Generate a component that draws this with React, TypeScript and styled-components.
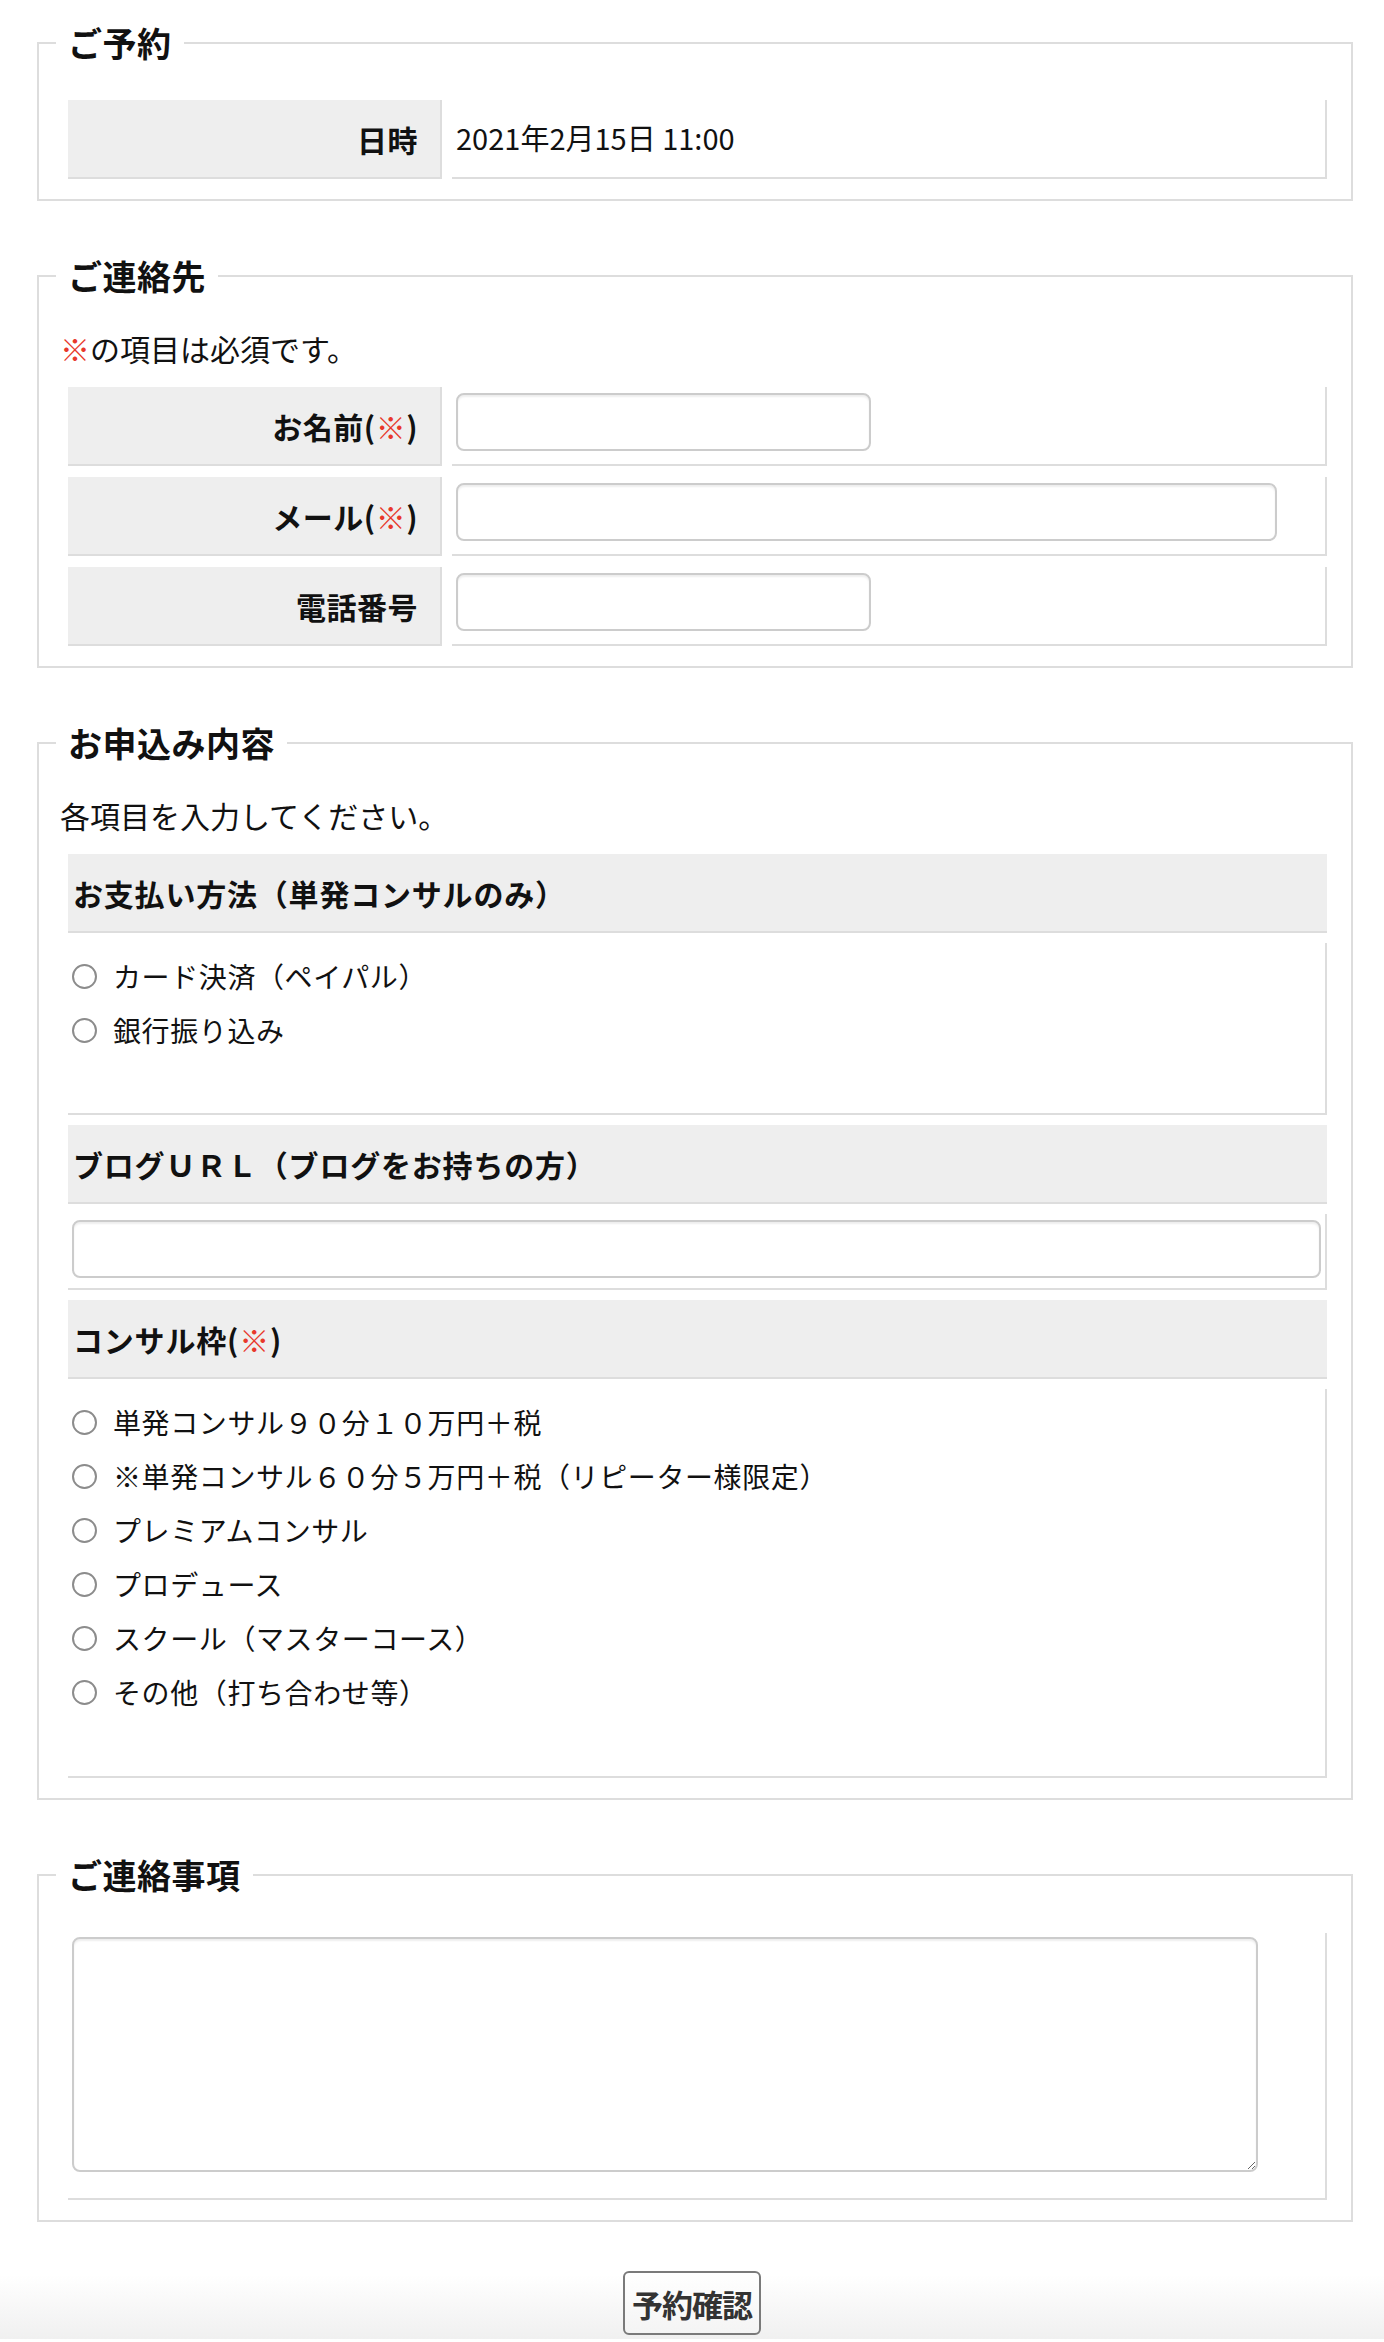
import React from 'react';
import styled, { createGlobalStyle } from 'styled-components';

const GlobalStyle = createGlobalStyle`
  html, body {
    margin: 0;
    padding: 0;
    background: #fff;
  }
  body {
    font-family: "Noto Sans CJK JP", "Noto Sans", sans-serif;
    color: #111;
  }
  * {
    box-sizing: border-box;
  }
`;

const Page = styled.div`
  padding: 18px 31px 0 37px;
`;

const FormSection = styled.fieldset`
  margin: 0 0 50px;
  padding: 0 16px 20px 21px;
  border: 2px solid #dddddd;
  min-width: 0;

  &:last-of-type {
    margin-bottom: 0;
  }
`;

const Legend = styled.legend`
  margin-left: -4px;
  padding: 0 12px;
  font-size: 34px;
  font-weight: 700;
  line-height: 50px;
  letter-spacing: 0.5px;
  color: #111;
`;

const Note = styled.p`
  margin: 25px 0 16px;
  font-size: 30px;
  line-height: 45px;
`;

const Req = styled.span`
  color: #e8382b;
  font-weight: 400;
`;

const Table = styled.div<{ $top?: number }>`
  margin: ${(p) => p.$top ?? 0}px 8px 0;
  display: grid;
  grid-template-columns: 374px 1fr;
  column-gap: 10px;
  row-gap: 11px;
`;

const Th = styled.div`
  height: 79px;
  background: #eeeeee;
  border-right: 2px solid #dddddd;
  border-bottom: 2px solid #dddddd;
  padding-right: 22px;
  display: flex;
  align-items: center;
  justify-content: flex-end;
  font-size: 30px;
  font-weight: 700;
  letter-spacing: 0.5px;
`;

const Td = styled.div<{ $center?: boolean }>`
  border-right: 2px solid #dddddd;
  border-bottom: 2px solid #dddddd;
  padding: 6px 4px 0;
  display: flex;
  align-items: ${(p) => (p.$center ? 'center' : 'flex-start')};
  font-size: ${(p) => (p.$center ? 29 : 30)}px;
  ${(p) => (p.$center ? 'padding-bottom: 10px;' : '')}
`;

const TextInput = styled.input<{ $w: number }>`
  width: ${(p) => p.$w}px;
  height: 58px;
  border: 2px solid #cccccc;
  border-radius: 8px;
  box-shadow: inset 0 2px 2px rgba(0, 0, 0, 0.07);
  background: #fff;
  font-size: 28px;
  padding: 0 10px;
  font-family: inherit;
  outline: none;
`;

const Blocks = styled.div`
  margin: 0 8px;
  display: flex;
  flex-direction: column;
  gap: 10px;
`;

const BlockHead = styled.div`
  height: 79px;
  background: #eeeeee;
  border-bottom: 2px solid #dddddd;
  padding-left: 5px;
  display: flex;
  align-items: center;
  font-size: 30px;
  font-weight: 700;
  letter-spacing: 0.8px;
`;

const BlockBody = styled.div<{ $pb: number }>`
  border-right: 2px solid #dddddd;
  border-bottom: 2px solid #dddddd;
  padding: 6px 4px ${(p) => p.$pb}px;
`;

const RadioRow = styled.label`
  display: flex;
  align-items: center;
  height: 54px;
  font-size: 28px;
  letter-spacing: 0.6px;
  cursor: pointer;
`;

const Radio = styled.input`
  appearance: none;
  width: 25px;
  height: 25px;
  margin: 0 16px 0 0;
  border: 2px solid #8c8c8c;
  border-radius: 50%;
  background: #fff;
  flex: none;

  &:checked {
    background: radial-gradient(circle, #333 0 40%, #fff 45%);
  }
`;

const MessageArea = styled.textarea`
  width: 1186px;
  height: 235px;
  border: 2px solid #cccccc;
  border-radius: 8px;
  box-shadow: inset 0 2px 2px rgba(0, 0, 0, 0.07);
  font-family: inherit;
  font-size: 28px;
  padding: 8px 10px;
  display: block;
  outline: none;
`;

const MessageCell = styled.div`
  margin: 33px 8px 0;
  border-right: 2px solid #dddddd;
  border-bottom: 2px solid #dddddd;
  padding: 4px 4px 26px;
`;

const Footer = styled.div`
  padding: 49px 0 4px;
  display: flex;
  justify-content: center;
  background: linear-gradient(to bottom, #ffffff 45%, #f0f0f0 100%);
`;

const SubmitButton = styled.button`
  height: 64px;
  padding: 0 7px;
  border: 2px solid #7a7a7a;
  border-radius: 6px;
  background: linear-gradient(to bottom, #ffffff, #f4f4f4);
  font-family: "Noto Sans CJK JP", sans-serif;
  font-size: 31px;
  font-weight: 700;
  color: #333;
  letter-spacing: -1px;
  cursor: pointer;
`;

const payments = ['カード決済（ペイパル）', '銀行振り込み'];

const plans = [
  '単発コンサル９０分１０万円＋税',
  '※単発コンサル６０分５万円＋税（リピーター様限定）',
  'プレミアムコンサル',
  'プロデュース',
  'スクール（マスターコース）',
  'その他（打ち合わせ等）',
];

const App: React.FC = () => {
  return (
    <>
      <GlobalStyle />
      <Page>
        <FormSection>
          <Legend>ご予約</Legend>
          <Table $top={32}>
            <Th>日時</Th>
            <Td $center>2021年2月15日 11:00</Td>
          </Table>
        </FormSection>

        <FormSection>
          <Legend>ご連絡先</Legend>
          <Note>
            <Req>※</Req>の項目は必須です。
          </Note>
          <Table>
            <Th>
              お名前(<Req>※</Req>)
            </Th>
            <Td>
              <TextInput type="text" $w={415} />
            </Td>
            <Th>
              メール(<Req>※</Req>)
            </Th>
            <Td>
              <TextInput type="email" $w={821} />
            </Td>
            <Th>電話番号</Th>
            <Td>
              <TextInput type="tel" $w={415} />
            </Td>
          </Table>
        </FormSection>

        <FormSection>
          <Legend>お申込み内容</Legend>
          <Note>各項目を入力してください。</Note>
          <Blocks>
            <BlockHead>お支払い方法（単発コンサルのみ）</BlockHead>
            <BlockBody $pb={56}>
              {payments.map((p) => (
                <RadioRow key={p}>
                  <Radio type="radio" name="payment" />
                  {p}
                </RadioRow>
              ))}
            </BlockBody>
            <BlockHead>ブログＵＲＬ（ブログをお持ちの方）</BlockHead>
            <BlockBody $pb={10}>
              <TextInput type="url" $w={1249} />
            </BlockBody>
            <BlockHead>
              コンサル枠(<Req>※</Req>)
            </BlockHead>
            <BlockBody $pb={57}>
              {plans.map((p) => (
                <RadioRow key={p}>
                  <Radio type="radio" name="plan" />
                  {p}
                </RadioRow>
              ))}
            </BlockBody>
          </Blocks>
        </FormSection>

        <FormSection>
          <Legend>ご連絡事項</Legend>
          <MessageCell>
            <MessageArea />
          </MessageCell>
        </FormSection>
      </Page>
      <Footer>
        <SubmitButton type="button">予約確認</SubmitButton>
      </Footer>
    </>
  );
};

export default App;
